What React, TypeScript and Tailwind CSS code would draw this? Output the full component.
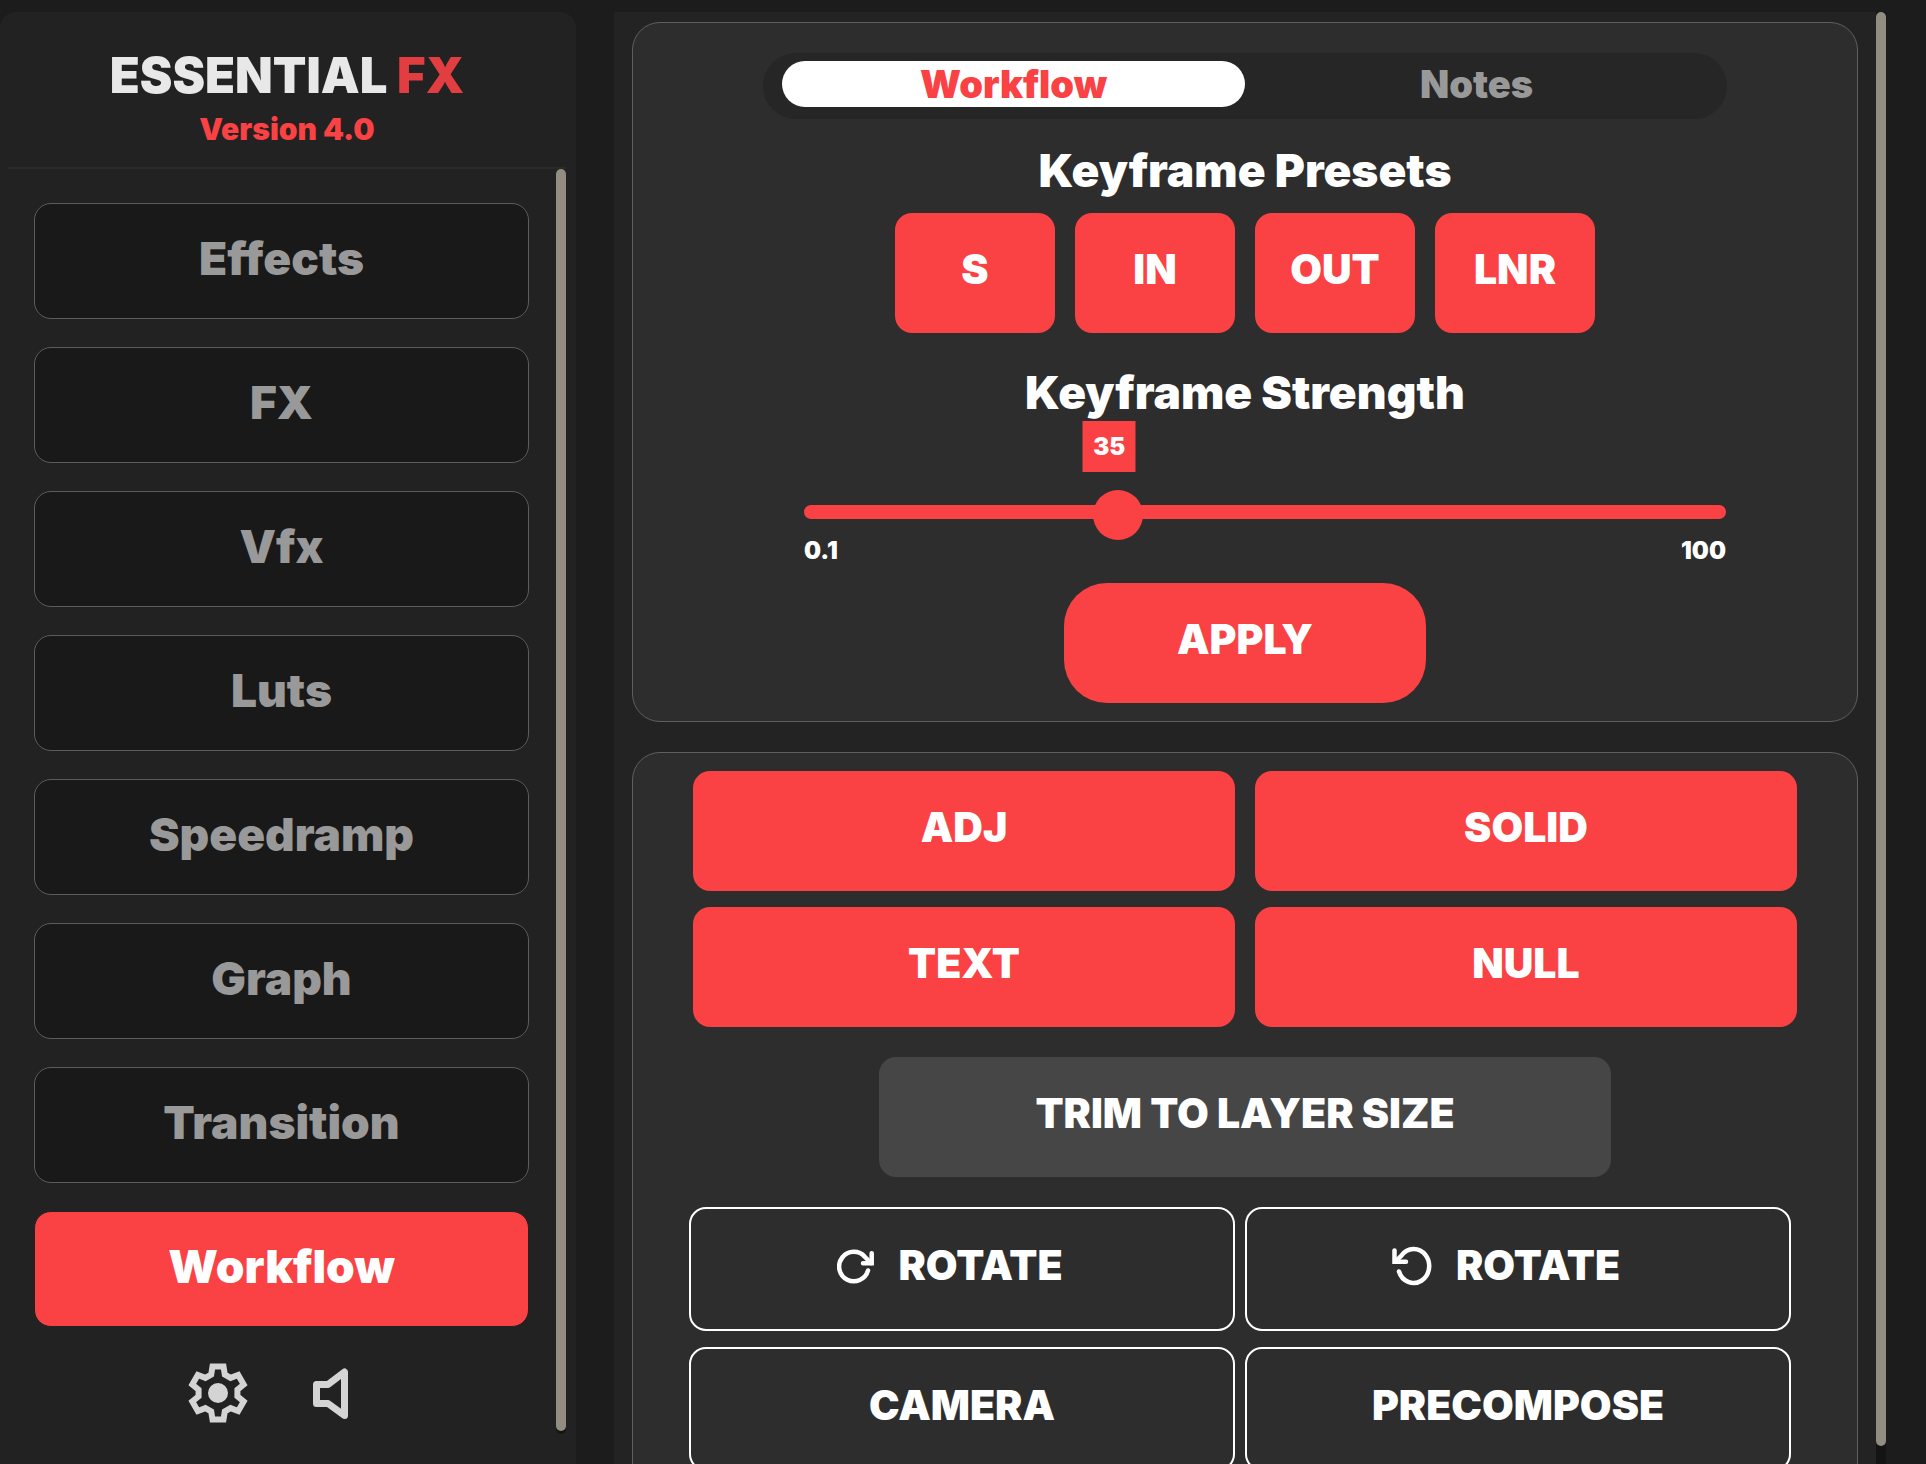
import React, { useState } from 'react';
import clsx from 'clsx';

const NAV_ITEMS = ['Effects', 'FX', 'Vfx', 'Luts', 'Speedramp', 'Graph', 'Transition', 'Workflow'];
const TABS = ['Workflow', 'Notes'];
const PRESETS = ['S', 'IN', 'OUT', 'LNR'];
const LAYERS = ['ADJ', 'SOLID', 'TEXT', 'NULL'];

const STRENGTH_MIN = 0.1;
const STRENGTH_MAX = 105.5;

function GearIcon() {
  return (
    <svg width="60" height="60" viewBox="-30 -30 60 60" fill="none" aria-hidden="true">
      <path
        d="M-5.5-26.5H5.5L6.8-18.5 12.62-15.14 20.2-18 25.7-8.5 19.42-3.36V3.36L25.7 8.5 20.2 18 12.62 15.14 6.8 18.5 5.5 26.5H-5.5L-6.8 18.5-12.62 15.14-20.2 18-25.7 8.5-19.42 3.36V-3.36L-25.7-8.5-20.2-18-12.62-15.14-6.8-18.5Z"
        stroke="currentColor"
        strokeWidth="6"
      />
      <circle r="10" fill="currentColor" />
    </svg>
  );
}

function SpeakerIcon() {
  return (
    <svg width="37" height="51" viewBox="0 0 37 51" fill="none" aria-hidden="true">
      <path
        d="M4.5 16.5H16L32.5 4V47.5L16 35.5H4.5Z"
        stroke="currentColor"
        strokeWidth="7"
        strokeLinejoin="round"
      />
    </svg>
  );
}

function RotateRightIcon() {
  return (
    <svg width="37" height="35" viewBox="0 0 37 35" fill="none" stroke="currentColor" strokeWidth="4.5" strokeLinecap="round" aria-hidden="true">
      <path d="M31 21.5A14.7 14.7 0 1 1 28 8L34 14" />
      <path d="M26 14.3H34.7V4.3" />
    </svg>
  );
}

function RotateLeftIcon() {
  return (
    <svg width="40" height="40" viewBox="0 0 40 40" fill="none" stroke="currentColor" strokeWidth="4.5" strokeLinecap="round" aria-hidden="true">
      <path d="M7 25.5A15.5 17 0 1 0 9.5 9.5L4 15" />
      <path d="M14 15.8H2.5V4.5" />
    </svg>
  );
}

function RedButton({ children, className }: { children: React.ReactNode; className?: string }) {
  return (
    <button
      type="button"
      className={clsx('h-[120px] bg-[#fa4143] pb-1.5 text-[41px] font-black hover:bg-[#e63a3c] cursor-pointer', className)}
    >
      {children}
    </button>
  );
}

function OutlineButton({ children, icon }: { children: React.ReactNode; icon?: React.ReactNode }) {
  return (
    <button
      type="button"
      className={clsx(
        'h-[124px] rounded-[17px] border-2 border-white pb-1.5 text-[41px] font-black flex items-center justify-center gap-6 hover:bg-white/5 cursor-pointer',
        icon && 'pr-6'
      )}
    >
      {icon}
      {children}
    </button>
  );
}

function Sidebar() {
  const [active, setActive] = useState('Workflow');

  return (
    <aside className="mt-3 w-[576px] shrink-0 rounded-t-2xl bg-[#222222] pl-2 pr-[10px] flex flex-col">
      <header className="border-b-2 border-[#2a2a2a] pt-9 pb-[22px] text-center font-black">
        <h1 className="text-[49px] leading-[56px] text-[#e8e8e8]">
          ESSENTIAL <span className="text-[#e23e42]">FX</span>
        </h1>
        <p className="mt-[9px] text-[30px] leading-8 text-[#fa4143]">Version 4.0</p>
      </header>

      <div className="flex-1 min-h-0 flex">
        <nav className="flex-1 overflow-hidden pt-[34px] pl-[26px] pr-[27px]">
          <div className="flex flex-col gap-7">
            {NAV_ITEMS.map(item => (
              <button
                key={item}
                type="button"
                onClick={() => setActive(item)}
                className={clsx(
                  'h-[116px] rounded-[17px] border pb-1.5 text-[46px] font-black cursor-pointer',
                  item === active
                    ? 'border-[#222222] bg-[#fa4143] text-white'
                    : 'border-[#5c5c5c] bg-[#191919] text-[#999999]'
                )}
              >
                {item}
              </button>
            ))}
          </div>
          <div className="mt-9 mr-1 flex justify-center gap-16 text-[#d4d4d4]">
            <button type="button" aria-label="Settings" className="size-[60px] cursor-pointer">
              <GearIcon />
            </button>
            <button type="button" aria-label="Sound" className="size-[60px] flex items-center cursor-pointer">
              <SpeakerIcon />
            </button>
          </div>
        </nav>
        <div className="mb-[30px] w-[10px] rounded-full bg-[#141414] pb-[3px]">
          <div className="h-full rounded-full bg-[#918d80]" />
        </div>
      </div>
    </aside>
  );
}

function KeyframeCard() {
  const [tab, setTab] = useState('Workflow');
  const [strength, setStrength] = useState(35);
  const percent = ((strength - STRENGTH_MIN) / (STRENGTH_MAX - STRENGTH_MIN)) * 100;

  return (
    <section className="rounded-[28px] border border-[#5f5f5f] bg-[#2d2d2d] pt-[30px] pb-[18px] flex flex-col items-center">
      <div className="h-[66px] w-[964px] max-w-full rounded-full bg-[#262626] px-[19px] pt-2 pb-3 flex">
        {TABS.map(name => (
          <button
            key={name}
            type="button"
            onClick={() => setTab(name)}
            className={clsx(
              'flex-1 rounded-full text-[38px] leading-[46px] font-black cursor-pointer',
              name === tab ? 'bg-white text-[#fa4143]' : 'text-[#999999]'
            )}
          >
            {name}
          </button>
        ))}
      </div>

      <h2 className="mt-6 text-[46px] leading-[54px] font-black">Keyframe Presets</h2>
      <div className="mt-4 flex gap-5">
        {PRESETS.map(name => (
          <RedButton key={name} className="w-40 rounded-[17px]">{name}</RedButton>
        ))}
      </div>

      <h2 className="mt-8 text-[46px] leading-[54px] font-black">
        <label htmlFor="strength">Keyframe Strength</label>
      </h2>
      <div className="relative ml-10 w-[922px] max-w-full pt-[86px] text-2xl leading-6 font-black">
        <output
          htmlFor="strength"
          className="absolute top-[2px] h-[51px] w-[53px] -translate-x-1/2 bg-[#fa4143] flex items-center justify-center"
          style={{ left: `${percent}%` }}
        >
          {strength}
        </output>
        <input
          id="strength"
          type="range"
          min={STRENGTH_MIN}
          max={STRENGTH_MAX}
          step="any"
          value={strength}
          onChange={e => setStrength(Math.round(Number(e.target.value)))}
          className="block h-[14px] w-full appearance-none rounded-full bg-[#fa4143] cursor-pointer [&::-webkit-slider-thumb]:mt-[6px] [&::-webkit-slider-thumb]:size-[50px] [&::-webkit-slider-thumb]:appearance-none [&::-webkit-slider-thumb]:rounded-full [&::-webkit-slider-thumb]:bg-[#fa4143]"
        />
        <div className="mt-5 flex justify-between">
          <span>0.1</span>
          <span>100</span>
        </div>
      </div>

      <RedButton className="mt-5 w-[362px] rounded-[43px]">APPLY</RedButton>
    </section>
  );
}

function LayerCard() {
  return (
    <section className="rounded-t-[28px] border border-[#5f5f5f] bg-[#2d2d2d] pt-[18px] pb-8">
      <div className="mx-[60px] grid grid-cols-2 gap-x-5 gap-y-4">
        {LAYERS.map(name => (
          <RedButton key={name} className="rounded-[17px]">{name}</RedButton>
        ))}
      </div>

      <div className="mt-[30px] flex justify-center">
        <button type="button" className="h-[120px] w-[732px] rounded-[17px] bg-[#464646] pb-1.5 text-[41px] font-black hover:bg-[#505050] cursor-pointer">
          TRIM TO LAYER SIZE
        </button>
      </div>

      <div className="mt-[30px] ml-14 mr-[66px] grid grid-cols-2 gap-x-[10px] gap-y-4">
        <OutlineButton icon={<RotateRightIcon />}>ROTATE</OutlineButton>
        <OutlineButton icon={<RotateLeftIcon />}>ROTATE</OutlineButton>
        <OutlineButton>CAMERA</OutlineButton>
        <OutlineButton>PRECOMPOSE</OutlineButton>
      </div>
    </section>
  );
}

export default function App() {
  return (
    <div className="h-screen overflow-hidden bg-[#1c1c1c] font-['Inter',sans-serif] text-white flex">
      <Sidebar />
      <main className="mt-3 ml-[38px] mr-10 flex-1 min-w-0 bg-[#232323] flex">
        <div className="flex-1 min-w-0 overflow-hidden px-[18px] pt-[10px] flex flex-col gap-[30px]">
          <KeyframeCard />
          <LayerCard />
        </div>
        <div className="w-[10px] bg-[#141414] pb-[18px]">
          <div className="h-full rounded-full bg-[#918d80]" />
        </div>
      </main>
    </div>
  );
}
